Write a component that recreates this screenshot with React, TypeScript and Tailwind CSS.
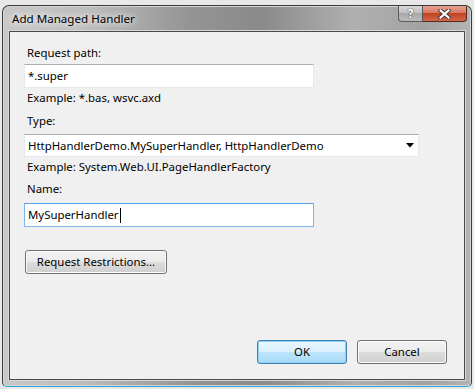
import React from 'react'

// Win7-style "Add Managed Handler" dialog
const font = "font-['Segoe_UI','Noto_Sans',sans-serif]"

const Label: React.FC<{ children: React.ReactNode; className?: string }> = ({ children, className = '' }) => (
  <div className={`h-4 pl-[17px] text-[11.4px] leading-4 text-black ${className}`}>{children}</div>
)

const TextBox: React.FC<{ value: string; focused?: boolean; className?: string }> = ({ value, focused, className = '' }) => (
  <div
    className={`ml-[14px] flex h-6 w-[290px] items-center border bg-white pl-[3px] text-[11.4px] text-black ${
      focused
        ? 'border-[#7eb4ea] border-t-[#569de5]'
        : 'border-[#e3e9ef] border-t-[#abadb3]'
    } ${className}`}
  >
    <span>{value}</span>
    {focused && <span className="ml-px h-[15px] w-px bg-black" />}
  </div>
)

const Button: React.FC<{ label: string; isDefault?: boolean; className?: string }> = ({ label, isDefault, className = '' }) => (
  <div
    className={`flex h-6 items-center justify-center rounded-[3px] border text-[11.4px] text-black ${
      isDefault
        ? 'border-[#3c7fb1] shadow-[inset_0_0_0_1px_#8fd1f5] bg-[linear-gradient(#eaf6fd_0%,#d9f0fc_50%,#bee6fd_50%,#a7d9f5_100%)]'
        : 'border-[#707070] shadow-[inset_0_0_0_1px_#fcfcfc] bg-[linear-gradient(#f2f2f2_0%,#ebebeb_50%,#dddddd_50%,#cfcfcf_100%)]'
    } ${className}`}
  >
    {label}
  </div>
)

export default function App() {
  return (
    <div className={`h-[389px] w-[474px] overflow-hidden bg-[#e8e8e8] ${font}`}>
      <div className="ml-[2px] mt-[5px] flex h-[382px] w-[470px] flex-col rounded-t-[7px] rounded-b-[5px] border border-[#3a3a3a] border-b-[#2aa7d8] bg-[linear-gradient(90deg,#c8c8c8_0%,#bcbcbc_18%,#949494_40%,#8a8a8a_55%,#b0b0b0_75%,#a2a2a2_90%,#b4b4b4_100%)] shadow-[inset_0_0_0_1px_#d6d6d6]">
        {/* Title bar */}
        <div className="relative flex h-[25px] shrink-0 items-center">
          <span className="ml-[9px] mt-[1px] text-[11.6px] text-black [text-shadow:0_0_6px_#ffffff,0_0_10px_#ffffff]">
            Add Managed Handler
          </span>
          <div className="absolute right-[4px] top-0 flex h-[16px]">
            <div className="flex w-[25px] items-center justify-center rounded-bl-[4px] border border-t-0 border-[#5a5a5a] bg-[linear-gradient(#d6d6d6_0%,#c0c0c0_50%,#a8a8a8_50%,#bcbcbc_100%)] text-[12px] font-bold text-white [text-shadow:0_0_1px_#333,0_0_1px_#333]">
              ?
            </div>
            <div className="flex w-[44px] items-center justify-center rounded-br-[4px] border border-l-0 border-t-0 border-[#5a2a20] bg-[linear-gradient(#e8a090_0%,#d8735e_50%,#c2431f_50%,#d0684a_100%)]">
              <svg width="13" height="10" viewBox="0 0 13 10">
                <path d="M2.5 1.5 L10.5 8.5 M10.5 1.5 L2.5 8.5" stroke="#3a3a3a" strokeWidth="4" strokeLinecap="square" />
                <path d="M2.5 1.5 L10.5 8.5 M10.5 1.5 L2.5 8.5" stroke="#ffffff" strokeWidth="2.2" strokeLinecap="square" />
              </svg>
            </div>
          </div>
        </div>

        {/* Client area */}
        <div className="mx-[6px] mb-[6px] flex flex-1 flex-col border border-[#4a4a4a] bg-[#f0f0f0] shadow-[0_0_0_1px_#d8d8d8]">
          <Label className="mt-[13px]">Request path:</Label>
          <TextBox value="*.super" className="mt-[3px]" />
          <Label className="mt-[2px]">Example: *.bas, wsvc.axd</Label>

          <Label className="mt-[7px]">Type:</Label>
          <div className="ml-[14px] mt-[5px] flex h-[23px] w-[395px] items-center justify-between border border-[#e3e9ef] border-t-[#abadb3] bg-white pl-[3px] pr-[4px] text-[11.4px] text-black">
            <span>HttpHandlerDemo.MySuperHandler, HttpHandlerDemo</span>
            <svg width="8" height="5" viewBox="0 0 8 5">
              <path d="M0 0 H8 L4 4.5 Z" fill="#000" />
            </svg>
          </div>
          <Label className="mt-[2px]">Example: System.Web.UI.PageHandlerFactory</Label>

          <Label className="mt-[6px]">Name:</Label>
          <TextBox value="MySuperHandler" focused className="mt-[6px]" />

          <Button label="Request Restrictions..." className="ml-[15px] mt-[23px] w-[142px]" />

          <div className="mt-auto mb-[15px] flex justify-end gap-[10px] pr-[17px]">
            <Button label="OK" isDefault className="w-[90px]" />
            <Button label="Cancel" className="w-[90px]" />
          </div>
        </div>
      </div>
    </div>
  )
}
